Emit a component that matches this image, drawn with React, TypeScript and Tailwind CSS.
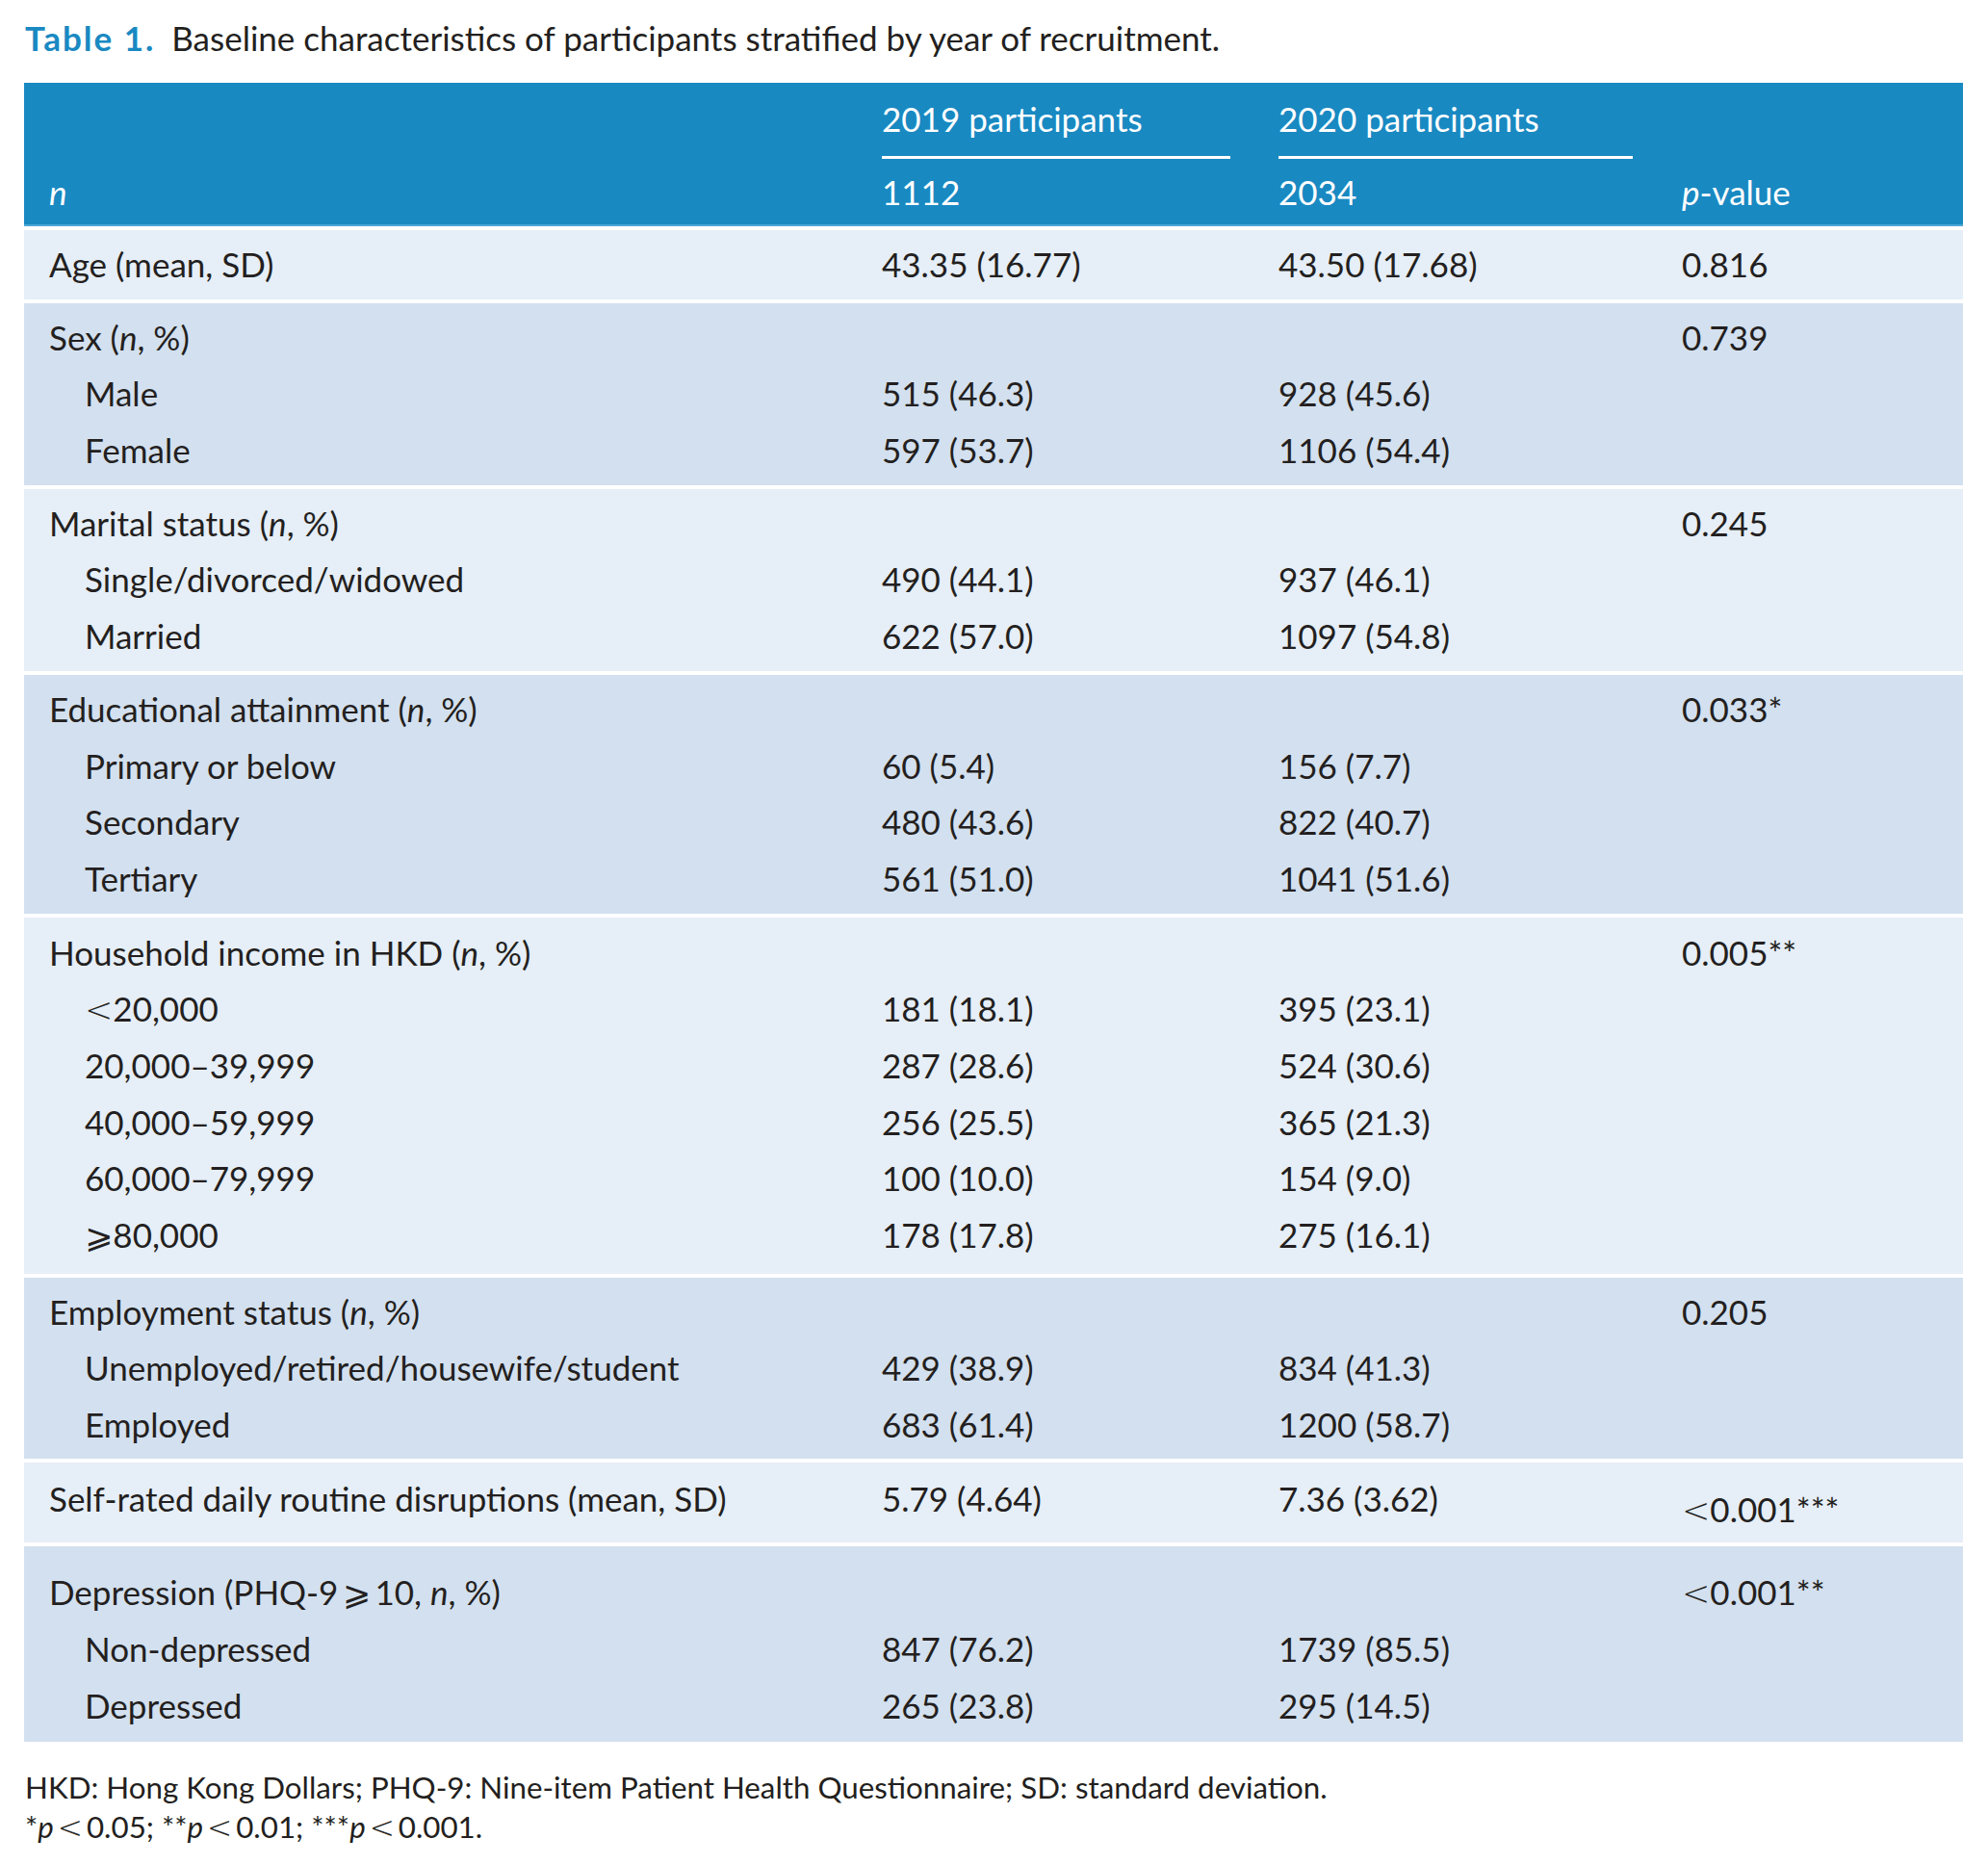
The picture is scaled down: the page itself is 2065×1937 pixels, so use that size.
import React from "react";

type Row = {
  label: React.ReactNode;
  v1?: string;
  v2?: string;
  p?: React.ReactNode;
  indent?: boolean;
};

const COLS = "grid grid-cols-[891px_412px_419px_292px]";

const Lt = () => (
  <span className="font-extralight" style={{ fontFamily: "'DejaVu Sans', sans-serif" }}>
    {"<"}
  </span>
);

const I = ({ children }: { children: React.ReactNode }) => <i>{children}</i>;

function Group({
  rows,
  bg,
  pt,
  pb,
  pOffset,
}: {
  rows: Row[];
  bg: string;
  pt: string;
  pb: string;
  pOffset?: string;
}) {
  return (
    <div className={`${bg} ${pt} ${pb} mt-[4px]`}>
      {rows.map((r, i) => (
        <div key={i} className={`${COLS} h-[58.7px] leading-[58.7px]`}>
          <div className={r.indent ? "pl-[63px]" : "pl-[26px]"}>{r.label}</div>
          <div>{r.v1}</div>
          <div>{r.v2}</div>
          <div className={pOffset ?? ""}>{r.p}</div>
        </div>
      ))}
    </div>
  );
}

export default function App() {
  return (
    <div
      className="bg-white w-[2065px] min-h-[1937px] text-[#231f20] text-[35px]"
      style={{ fontFamily: "Lato, 'DejaVu Sans', sans-serif" }}
    >
      <div className="pt-[10px] pl-[26px] leading-[59px]">
        <span className="font-bold text-[#1989c2] tracking-[2px]">Table 1.</span>
        <span className="ml-[17px]">
          Baseline characteristics of participants stratified by year of recruitment.
        </span>
      </div>

      <div className="ml-[25px] w-[2014px] mt-[17px]">
        {/* header */}
        <div className="bg-[#1989c2] text-white pt-[8px] pb-[4px] border-b-[2px] border-[#4aa6d6]">
          <div className={`${COLS} leading-[59px]`}>
            <div />
            <div className="pr-[50px]">
              <div>2019 participants</div>
              <div className="h-[3px] bg-white mt-[9px]" />
            </div>
            <div className="pr-[51px]">
              <div>2020 participants</div>
              <div className="h-[3px] bg-white mt-[9px]" />
            </div>
            <div />
          </div>
          <div className={`${COLS} leading-[59px] mt-[5px]`}>
            <div className="pl-[26px] italic">n</div>
            <div>1112</div>
            <div>2034</div>
            <div>
              <i>p</i>-value
            </div>
          </div>
        </div>

        <Group
          bg="bg-[#e6eef7]"
          pt="pt-[6px]"
          pb="pb-[7px]"
          rows={[{ label: "Age (mean, SD)", v1: "43.35 (16.77)", v2: "43.50 (17.68)", p: "0.816" }]}
        />
        <Group
          bg="bg-[#d3e0ef]"
          pt="pt-[6px]"
          pb="pb-[7px]"
          rows={[
            { label: <>Sex (<I>n</I>, %)</>, p: "0.739" },
            { label: "Male", v1: "515 (46.3)", v2: "928 (45.6)", indent: true },
            { label: "Female", v1: "597 (53.7)", v2: "1106 (54.4)", indent: true },
          ]}
        />
        <Group
          bg="bg-[#e6eef7]"
          pt="pt-[6px]"
          pb="pb-[7px]"
          rows={[
            { label: <>Marital status (<I>n</I>, %)</>, p: "0.245" },
            { label: "Single/divorced/widowed", v1: "490 (44.1)", v2: "937 (46.1)", indent: true },
            { label: "Married", v1: "622 (57.0)", v2: "1097 (54.8)", indent: true },
          ]}
        />
        <Group
          bg="bg-[#d3e0ef]"
          pt="pt-[6px]"
          pb="pb-[7px]"
          rows={[
            { label: <>Educational attainment (<I>n</I>, %)</>, p: "0.033*" },
            { label: "Primary or below", v1: "60 (5.4)", v2: "156 (7.7)", indent: true },
            { label: "Secondary", v1: "480 (43.6)", v2: "822 (40.7)", indent: true },
            { label: "Tertiary", v1: "561 (51.0)", v2: "1041 (51.6)", indent: true },
          ]}
        />
        <Group
          bg="bg-[#e6eef7]"
          pt="pt-[7px]"
          pb="pb-[11px]"
          rows={[
            { label: <>Household income in HKD (<I>n</I>, %)</>, p: "0.005**" },
            { label: <><Lt />20,000</>, v1: "181 (18.1)", v2: "395 (23.1)", indent: true },
            { label: "20,000–39,999", v1: "287 (28.6)", v2: "524 (30.6)", indent: true },
            { label: "40,000–59,999", v1: "256 (25.5)", v2: "365 (21.3)", indent: true },
            { label: "60,000–79,999", v1: "100 (10.0)", v2: "154 (9.0)", indent: true },
            { label: "⩾80,000", v1: "178 (17.8)", v2: "275 (16.1)", indent: true },
          ]}
        />
        <Group
          bg="bg-[#d3e0ef]"
          pt="pt-[6px]"
          pb="pb-[6px]"
          rows={[
            { label: <>Employment status (<I>n</I>, %)</>, p: "0.205" },
            {
              label: "Unemployed/retired/housewife/student",
              v1: "429 (38.9)",
              v2: "834 (41.3)",
              indent: true,
            },
            { label: "Employed", v1: "683 (61.4)", v2: "1200 (58.7)", indent: true },
          ]}
        />
        <Group
          bg="bg-[#e6eef7]"
          pt="pt-[8px]"
          pb="pb-[17px]"
          pOffset="relative top-[11px]"
          rows={[
            {
              label: "Self-rated daily routine disruptions (mean, SD)",
              v1: "5.79 (4.64)",
              v2: "7.36 (3.62)",
              p: <><Lt />0.001***</>,
            },
          ]}
        />
        <Group
          bg="bg-[#d3e0ef]"
          pt="pt-[18px]"
          pb="pb-[8px]"
          rows={[
            {
              label: (
                <>
                  Depression (PHQ-9{"\u2009"}⩾{"\u2009"}10, <I>n</I>, %)
                </>
              ),
              p: <><Lt />0.001**</>,
            },
            { label: "Non-depressed", v1: "847 (76.2)", v2: "1739 (85.5)", indent: true },
            { label: "Depressed", v1: "265 (23.8)", v2: "295 (14.5)", indent: true },
          ]}
        />
      </div>

      <div className="pl-[26px] mt-[27px] text-[31.3px] leading-[41px]">
        <div>HKD: Hong Kong Dollars; PHQ-9: Nine-item Patient Health Questionnaire; SD: standard deviation.</div>
        <div>
          *<i>p</i>
          {"\u2009"}
          <Lt />
          {"\u2009"}0.05; **<i>p</i>
          {"\u2009"}
          <Lt />
          {"\u2009"}0.01; ***<i>p</i>
          {"\u2009"}
          <Lt />
          {"\u2009"}0.001.
        </div>
      </div>
    </div>
  );
}
